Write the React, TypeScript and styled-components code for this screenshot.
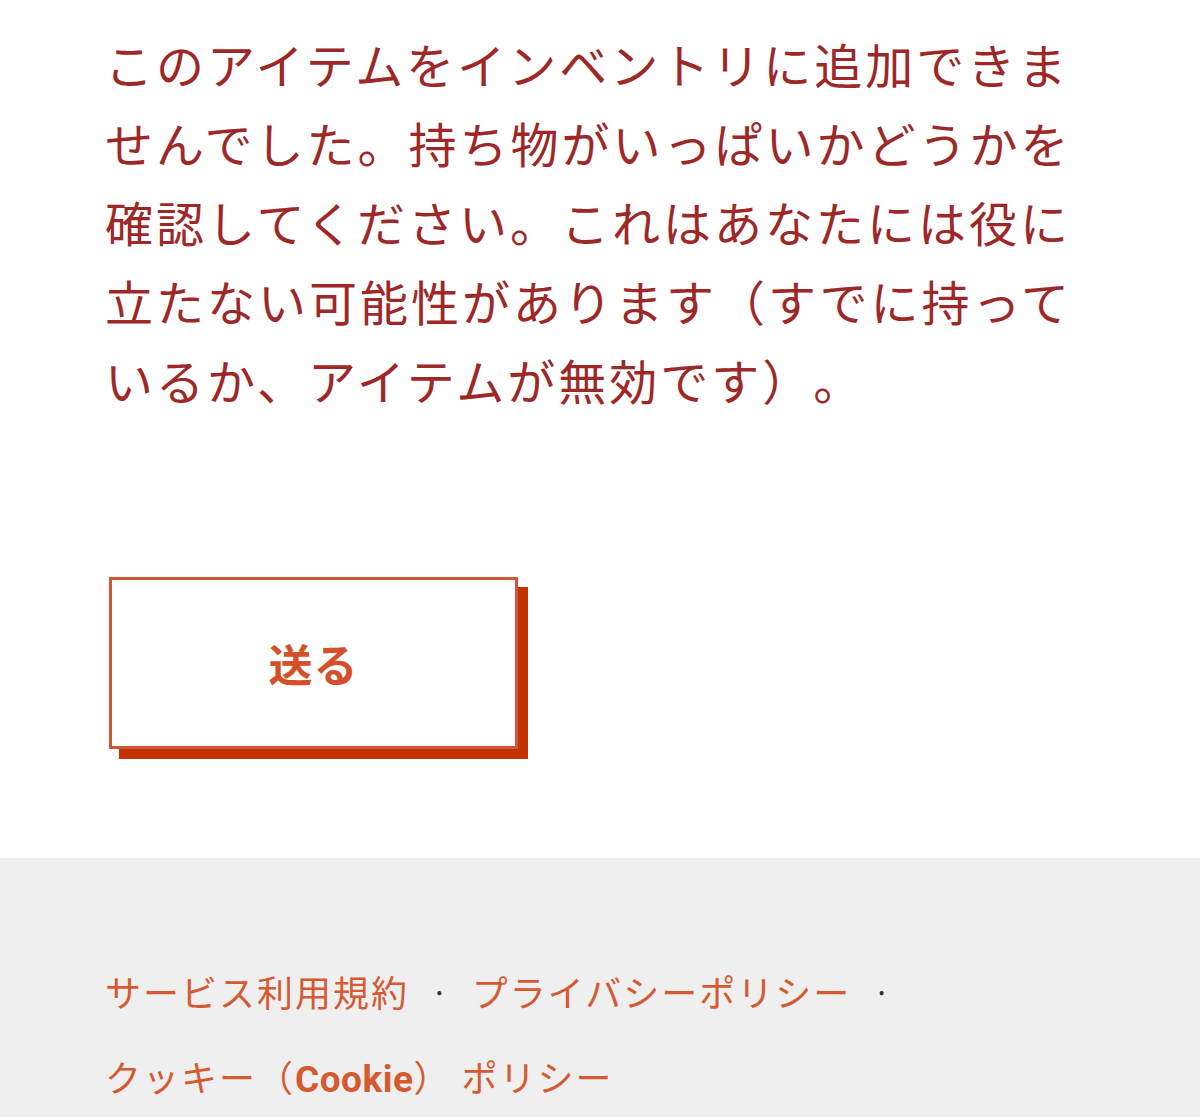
import React from 'react';
import styled, { createGlobalStyle } from 'styled-components';

const GlobalStyle = createGlobalStyle`
  html, body {
    margin: 0;
    padding: 0;
    background: #ffffff;
  }
  body {
    font-family: "Noto Sans CJK JP", "Noto Sans", sans-serif;
  }
`;

const Page = styled.div`
  display: flex;
  flex-direction: column;
  min-height: 1117px;
`;

const Main = styled.main`
  padding: 24px 105px 109px;
`;

const Message = styled.p`
  margin: 0;
  color: #9e2828;
  font-size: 48px;
  line-height: 79px;
  letter-spacing: 3px;
  text-spacing-trim: space-all;
`;

const ButtonWrap = styled.div`
  margin-top: 158px;
  padding-left: 4px;
`;

const SendButton = styled.button`
  width: 409px;
  height: 172px;
  background: #ffffff;
  border: 3px solid #cf5636;
  box-shadow: 10px 10px 0 #c33200;
  color: #d4502a;
  font-family: "Noto Sans CJK JP", sans-serif;
  font-size: 44px;
  font-weight: 700;
  letter-spacing: 1px;
  cursor: pointer;
`;

const Footer = styled.footer`
  flex: 1;
  background: #efeff0;
  padding: 90px 105px 0;
`;

const LinkLine = styled.div`
  display: flex;
  align-items: center;
  flex-wrap: wrap;
  height: 85px;
`;

const FooterLink = styled.a`
  color: #d65a31;
  font-size: 36px;
  letter-spacing: 2px;
  text-decoration: none;
  white-space: nowrap;
`;

const Latin = styled.span`
  font-family: Roboto, "Liberation Sans", sans-serif;
  font-size: 37px;
  font-weight: 700;
  letter-spacing: 0.5px;
`;

const Sep = styled.span`
  color: #333;
  font-size: 30px;
  margin: 0 24px 0 22px;
`;

export default function App() {
  return (
    <Page>
      <GlobalStyle />
      <Main>
        <Message>
          このアイテムをインベントリに追加できませんでした。持ち物がいっぱいかどうかを確認してください。これはあなたには役に立たない可能性があります（すでに持っているか、アイテムが無効です）。
        </Message>
        <ButtonWrap>
          <SendButton>送る</SendButton>
        </ButtonWrap>
      </Main>
      <Footer>
        <LinkLine>
          <FooterLink href="#">サービス利用規約</FooterLink>
          <Sep>·</Sep>
          <FooterLink href="#">プライバシーポリシー</FooterLink>
          <Sep>·</Sep>
        </LinkLine>
        <LinkLine>
          <FooterLink href="#">
            クッキー（<Latin>Cookie</Latin>） ポリシー
          </FooterLink>
        </LinkLine>
      </Footer>
    </Page>
  );
}
